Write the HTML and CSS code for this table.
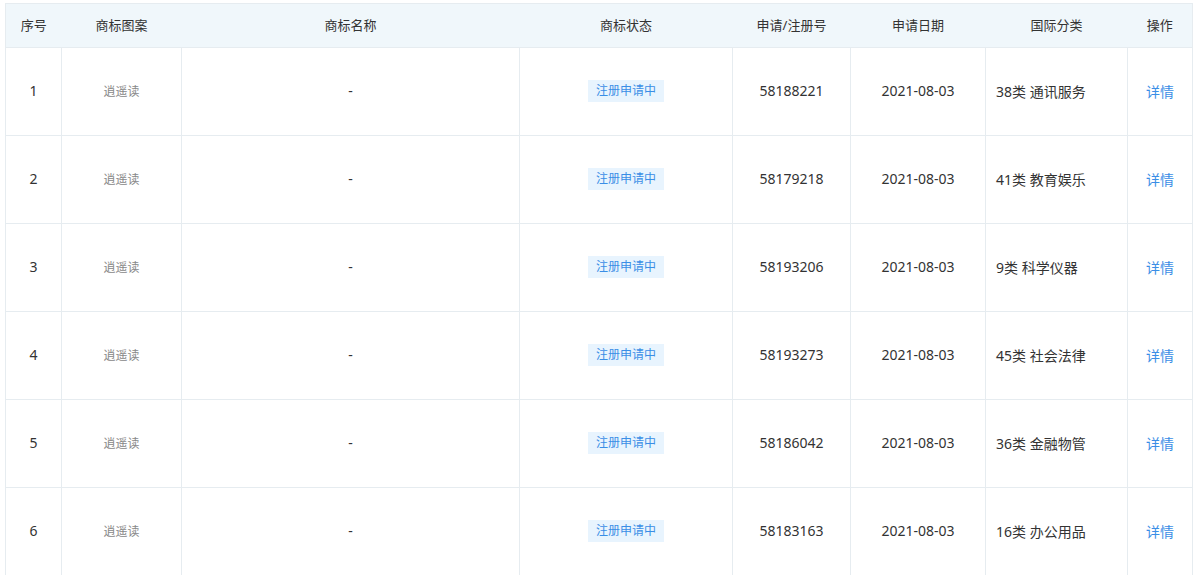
FILE: index.html
```html
<!DOCTYPE html>
<html lang="zh-CN">
<head>
<meta charset="utf-8">
<title>商标列表</title>
<link rel="stylesheet" href="styles.css">
</head>
<body>
<div class="wrap">
<table class="tm-table">
  <colgroup>
    <col class="c1"><col class="c2"><col class="c3"><col class="c4"><col class="c5"><col class="c6"><col class="c7"><col class="c8">
  </colgroup>
  <thead>
    <tr>
      <th>序号</th><th>商标图案</th><th>商标名称</th><th>商标状态</th><th>申请/注册号</th><th>申请日期</th><th>国际分类</th><th>操作</th>
    </tr>
  </thead>
  <tbody>
    <tr><td>1</td><td class="logo">逍遥读</td><td>-</td><td><span class="badge">注册申请中</span></td><td>58188221</td><td>2021-08-03</td><td class="cls">38类 通讯服务</td><td><a class="link">详情</a></td></tr>
    <tr><td>2</td><td class="logo">逍遥读</td><td>-</td><td><span class="badge">注册申请中</span></td><td>58179218</td><td>2021-08-03</td><td class="cls">41类 教育娱乐</td><td><a class="link">详情</a></td></tr>
    <tr><td>3</td><td class="logo">逍遥读</td><td>-</td><td><span class="badge">注册申请中</span></td><td>58193206</td><td>2021-08-03</td><td class="cls">9类 科学仪器</td><td><a class="link">详情</a></td></tr>
    <tr><td>4</td><td class="logo">逍遥读</td><td>-</td><td><span class="badge">注册申请中</span></td><td>58193273</td><td>2021-08-03</td><td class="cls">45类 社会法律</td><td><a class="link">详情</a></td></tr>
    <tr><td>5</td><td class="logo">逍遥读</td><td>-</td><td><span class="badge">注册申请中</span></td><td>58186042</td><td>2021-08-03</td><td class="cls">36类 金融物管</td><td><a class="link">详情</a></td></tr>
    <tr><td>6</td><td class="logo">逍遥读</td><td>-</td><td><span class="badge">注册申请中</span></td><td>58183163</td><td>2021-08-03</td><td class="cls">16类 办公用品</td><td><a class="link">详情</a></td></tr>
  </tbody>
</table>
</div>
</body>
</html>
```

FILE: styles.css
```css
html, body {
  margin: 0;
  padding: 0;
  background: #fff;
}
body {
  font-family: "Noto Sans", "Noto Sans CJK SC", sans-serif;
  color: #333;
}
.wrap {
  padding: 3px 8px 0 5px;
}
.tm-table {
  width: 1187px;
  table-layout: fixed;
  border-collapse: collapse;
  border: 1px solid #e6ecf0;
}
.c1 { width: 56px; }
.c2 { width: 120px; }
.c3 { width: 338px; }
.c4 { width: 213px; }
.c5 { width: 118px; }
.c6 { width: 135px; }
.c7 { width: 142px; }
.c8 { width: 65px; }
.tm-table th {
  height: 41px;
  padding: 0 0 2px;
  background: #f0f7fb;
  font-weight: normal;
  font-size: 13px;
  color: #333;
  text-align: center;
  border-bottom: 1px solid #e6ecf0;
}
.tm-table td {
  height: 85px;
  padding: 0 0 2px;
  font-size: 14px;
  color: #333;
  text-align: center;
  vertical-align: middle;
  border-right: 1px solid #e6ecf0;
  border-bottom: 1px solid #e6ecf0;
}
.tm-table td.logo {
  font-size: 12px;
  color: #888;
}
.tm-table td.cls {
  text-align: left;
  padding-left: 10px;
}
.badge {
  display: inline-block;
  padding: 0 8px;
  height: 22px;
  line-height: 22px;
  font-size: 12px;
  color: #3a8ee6;
  background: #e8f4fe;
}
.link {
  color: #3a8ee6;
  cursor: pointer;
}
```
